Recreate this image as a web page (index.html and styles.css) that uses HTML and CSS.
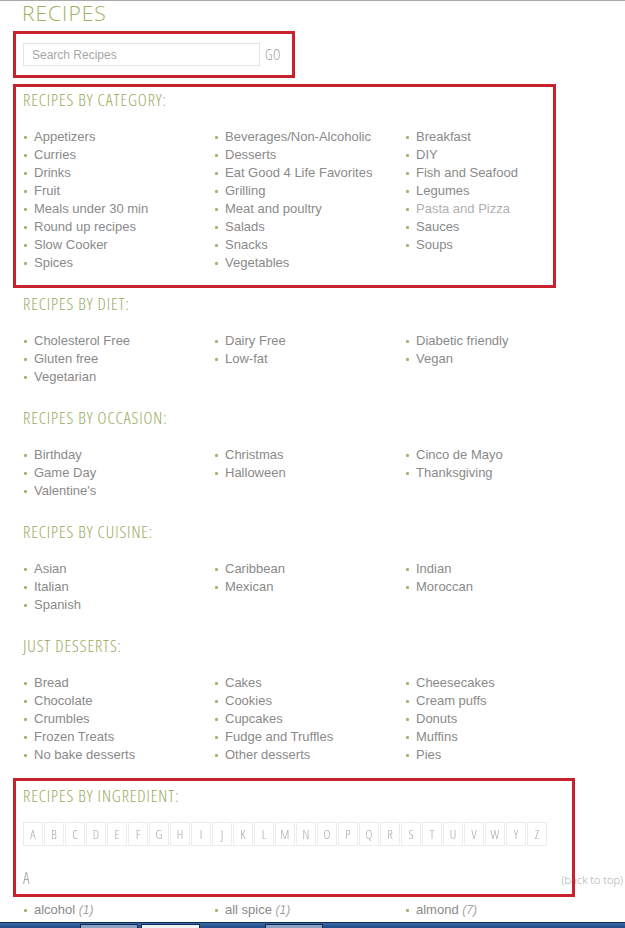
FILE: index.html
```html
<!DOCTYPE html>
<html lang="en">
<head>
<meta charset="utf-8">
<title>Recipes</title>
<link rel="stylesheet" href="styles.css">
</head>
<body>
<div class="page">
  <h1 class="title">RECIPES</h1>

  <div class="section hl hl-search">
    <form class="search">
      <input class="search-input" type="text" placeholder="Search Recipes">
      <span class="go">GO</span>
    </form>
  </div>

  <div class="section hl hl-cat">
    <h2 class="heading">RECIPES BY CATEGORY:</h2>
    <ul class="list">
      <li>Appetizers</li><li>Beverages/Non-Alcoholic</li><li>Breakfast</li>
      <li>Curries</li><li>Desserts</li><li>DIY</li>
      <li>Drinks</li><li>Eat Good 4 Life Favorites</li><li>Fish and Seafood</li>
      <li>Fruit</li><li>Grilling</li><li>Legumes</li>
      <li>Meals under 30 min</li><li>Meat and poultry</li><li class="visited">Pasta and Pizza</li>
      <li>Round up recipes</li><li>Salads</li><li>Sauces</li>
      <li>Slow Cooker</li><li>Snacks</li><li>Soups</li>
      <li>Spices</li><li>Vegetables</li>
    </ul>
  </div>

  <div class="section">
    <h2 class="heading">RECIPES BY DIET:</h2>
    <ul class="list">
      <li>Cholesterol Free</li><li>Dairy Free</li><li>Diabetic friendly</li>
      <li>Gluten free</li><li>Low-fat</li><li>Vegan</li>
      <li>Vegetarian</li>
    </ul>
  </div>

  <div class="section">
    <h2 class="heading">RECIPES BY OCCASION:</h2>
    <ul class="list">
      <li>Birthday</li><li>Christmas</li><li>Cinco de Mayo</li>
      <li>Game Day</li><li>Halloween</li><li>Thanksgiving</li>
      <li>Valentine's</li>
    </ul>
  </div>

  <div class="section">
    <h2 class="heading">RECIPES BY CUISINE:</h2>
    <ul class="list">
      <li>Asian</li><li>Caribbean</li><li>Indian</li>
      <li>Italian</li><li>Mexican</li><li>Moroccan</li>
      <li>Spanish</li>
    </ul>
  </div>

  <div class="section">
    <h2 class="heading">JUST DESSERTS:</h2>
    <ul class="list">
      <li>Bread</li><li>Cakes</li><li>Cheesecakes</li>
      <li>Chocolate</li><li>Cookies</li><li>Cream puffs</li>
      <li>Crumbles</li><li>Cupcakes</li><li>Donuts</li>
      <li>Frozen Treats</li><li>Fudge and Truffles</li><li>Muffins</li>
      <li>No bake desserts</li><li>Other desserts</li><li>Pies</li>
    </ul>
  </div>

  <div class="section hl hl-ing">
    <h2 class="heading heading-ing">RECIPES BY INGREDIENT:</h2>
    <div class="letters">
      <span class="letter">A</span><span class="letter">B</span><span class="letter">C</span><span class="letter">D</span><span class="letter">E</span><span class="letter">F</span><span class="letter">G</span><span class="letter">H</span><span class="letter">I</span><span class="letter">J</span><span class="letter">K</span><span class="letter">L</span><span class="letter">M</span><span class="letter">N</span><span class="letter">O</span><span class="letter">P</span><span class="letter">Q</span><span class="letter">R</span><span class="letter">S</span><span class="letter">T</span><span class="letter">U</span><span class="letter">V</span><span class="letter">W</span><span class="letter">Y</span><span class="letter">Z</span>
    </div>
    <div class="letter-head">
      <span class="letter-name">A</span>
      <span class="back-top">(back to top)</span>
    </div>
  </div>

  <div class="ing-list">
    <ul class="list">
      <li>alcohol <em>(1)</em></li><li>all spice <em>(1)</em></li><li>almond <em>(7)</em></li>
      <li>almond butter <em>(1)</em></li><li>almond flour <em>(2)</em></li><li>almond meal <em>(1)</em></li>
    </ul>
  </div>
</div>

<div class="taskbar">
  <span class="tb-btn tb-a"></span>
  <span class="tb-btn tb-b"></span>
  <span class="tb-btn tb-c"></span>
</div>
</body>
</html>
```

FILE: styles.css
```css
html, body {
  margin: 0;
  padding: 0;
  background: #fff;
}

body {
  font-family: "Liberation Sans", Arial, sans-serif;
  font-size: 13px;
  color: #8a8a8a;
  overflow: hidden;
  height: 928px;
}

.page {
  border-top: 1px solid #a9a9a9;
  padding-left: 13px;
}

.title,
.heading,
.go,
.letter,
.letter-name,
.back-top {
  font-family: "Open Sans", "Roboto", sans-serif;
  font-weight: 300;
}

.title {
  margin: 0;
  padding: 0 0 6px 9px;
  height: 24px;
  line-height: 24px;
  font-size: 21px;
  font-stretch: 95%;
  letter-spacing: 1px;
  color: #a0b062;
}

.section {
  padding: 6px 10px 16px;
}

.hl {
  position: relative;
}

.hl::after {
  content: "";
  position: absolute;
  top: 0;
  left: 0;
  bottom: 0;
  border: 3px solid #c8222f;
  pointer-events: none;
}

.hl-search {
  padding: 12px 10px;
  margin-bottom: 6px;
}

.hl-search::after { width: 276px; }
.hl-cat::after { width: 537px; }
.hl-ing::after { width: 556px; top: -2px; }

.search {
  display: flex;
  align-items: center;
  margin: 0;
}

.search-input {
  box-sizing: border-box;
  width: 237px;
  height: 23px;
  margin: 0;
  padding: 0 8px;
  border: 1px solid #e2e4ea;
  font-family: "Liberation Sans", Arial, sans-serif;
  font-size: 12px;
  color: #8a8a8a;
  outline: none;
}

.search-input::placeholder {
  color: #a8a8a8;
}

.go {
  margin-left: 5px;
  font-size: 14px;
  font-stretch: 75%;
  font-weight: 350;
  letter-spacing: 0.5px;
  color: #959595;
}

.heading {
  margin: 0 0 18px;
  height: 20px;
  line-height: 20px;
  font-size: 17px;
  font-stretch: 75%;
  font-weight: 350;
  letter-spacing: 0.9px;
  color: #97a95a;
}

.heading-ing {
  margin-bottom: 16px;
}

.list {
  list-style: none;
  margin: 0;
  padding: 0;
  display: grid;
  grid-template-columns: repeat(3, 191px);
  line-height: 18px;
}

.list li {
  white-space: nowrap;
}

.list li::before {
  content: "";
  display: inline-block;
  width: 3px;
  height: 3px;
  border-radius: 1px;
  background: #a9b36c;
  vertical-align: middle;
  margin: 0 7px 0 1px;
}

.list li.visited {
  color: #b0b0b0;
}

.list em {
  color: #a5a5a5;
  font-size: 12px;
}

.letters {
  display: flex;
  gap: 1px;
  margin-bottom: 22px;
  will-change: transform;
}

.letter {
  box-sizing: border-box;
  width: 20px;
  height: 24px;
  line-height: 22px;
  border: 1px solid #ececec;
  text-align: center;
  font-size: 13px;
  font-stretch: 75%;
  color: #a6a6a6;
}

.letter-head {
  display: flex;
  justify-content: space-between;
  align-items: baseline;
  height: 20px;
  line-height: 20px;
  margin-right: -8px;
}

.hl-ing {
  padding-bottom: 9px;
}

.letter-name {
  font-size: 16px;
  font-stretch: 75%;
  color: #9d9d9d;
}

.back-top {
  font-size: 11px;
  font-stretch: 90%;
  color: #a8a8a8;
}

.ing-list {
  padding: 4px 10px 0;
}

.taskbar {
  position: fixed;
  left: 0;
  right: 0;
  bottom: 0;
  height: 5px;
  background: linear-gradient(#3a6aa8, #1f4a86);
  border-top: 1px solid #0e2b55;
}

.tb-btn {
  position: absolute;
  top: 1px;
  height: 4px;
  border: 1px solid #0d2a52;
  border-bottom: none;
  box-sizing: border-box;
}

.tb-a { left: 80px; width: 58px; background: #8da3c3; }
.tb-b { left: 141px; width: 59px; background: #eef1f6; }
.tb-c { left: 265px; width: 58px; background: #8da3c3; }
```
